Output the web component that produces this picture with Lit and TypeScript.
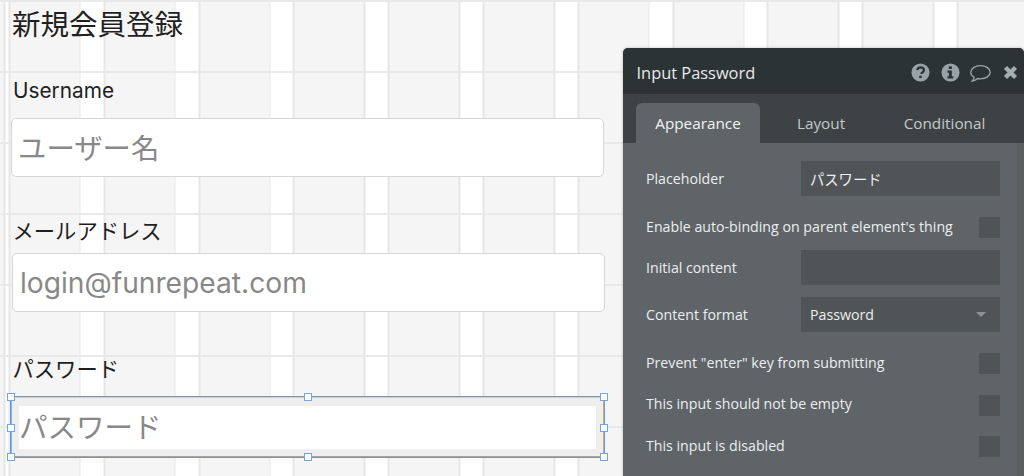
import { LitElement, css, html, svg } from 'lit';
import { customElement } from 'lit/decorators.js';

type Row =
	| { kind: 'input'; label: string; value?: string; select?: boolean }
	| { kind: 'check'; label: string };

const ROWS: Row[] = [
	{ kind: 'input', label: 'Placeholder', value: 'パスワード' },
	{ kind: 'check', label: "Enable auto-binding on parent element's thing" },
	{ kind: 'input', label: 'Initial content' },
	{ kind: 'input', label: 'Content format', value: 'Password', select: true },
	{ kind: 'check', label: 'Prevent "enter" key from submitting' },
	{ kind: 'check', label: 'This input should not be empty' },
	{ kind: 'check', label: 'This input is disabled' },
];

// selection handles, as percent of the selected box
const HANDLES = [
	[0, 0],
	[50, 0],
	[100, 0],
	[0, 51],
	[100, 51],
	[0, 100],
	[50, 100],
	[100, 100],
];

const ICON_HELP = svg`<circle cx="10" cy="10" r="9.5" fill="#98a3a7"/>
	<path d="M6.6 7.6c.2-2 1.6-3 3.5-3 2 0 3.5 1.2 3.5 2.9 0 1.5-1 2.1-1.9 2.7-.6.4-.8.7-.8 1.3" fill="none" stroke="#2b3335" stroke-width="2.3"/>
	<rect x="8.7" y="13.3" width="2.5" height="2.5" fill="#2b3335"/>`;

const ICON_INFO = svg`<circle cx="10" cy="10" r="9.5" fill="#98a3a7"/>
	<rect x="8.2" y="3.5" width="3.2" height="2.8" fill="#2b3335"/>
	<path d="M6.8 8h4.6v6h1.5v2.2H6.8V14h1.5v-3.8H6.8z" fill="#2b3335"/>`;

const ICON_BUBBLE = svg`<path d="M11 1.5c5.2 0 9.3 2.8 9.3 6.3s-4.1 6.3-9.3 6.3c-1 0-1.9-.1-2.8-.3-1.3 1.2-3 2-5 2.4.9-1 1.5-2.1 1.7-3.6C2.9 11.5 1.7 9.7 1.7 7.8c0-3.5 4.1-6.3 9.3-6.3z" fill="none" stroke="#98a3a7" stroke-width="1.3"/>`;

const ICON_CLOSE = svg`<path d="M2.5 2.5l10 10M12.5 2.5l-10 10" fill="none" stroke="#a3aeb1" stroke-width="4.3"/>`;

@customElement('app-root')
export class AppRoot extends LitElement {
	static styles = css`
		:host {
			display: block;
			position: relative;
			width: 1024px;
			height: 476px;
			overflow: hidden;
			font-family: 'Inter', 'Noto Sans CJK JP', sans-serif;
			color: #1f1f1f;
			background-color: #ffffff;
			background-image:
				repeating-linear-gradient(to bottom, #e9e9e9 0 2px, transparent 2px 71px),
				repeating-linear-gradient(
					to right,
					#e6e6e6 0 2px,
					#f5f5f5 2px 71px,
					#e6e6e6 71px 72.5px,
					#ffffff 72.5px 94.8px
				);
			background-position: 0 0, 8.5px 0;
		}

		.form {
			display: flex;
			flex-direction: column;
		}

		.title {
			height: 48px;
			line-height: 45px;
			margin-left: 12px;
			font-family: 'Noto Sans CJK JP', sans-serif;
			font-size: 28.5px;
		}

		.label {
			height: 30px;
			line-height: 30px;
			margin-left: 13px;
			font-size: 20.8px;
		}

		.label.jp {
			margin-left: 12.5px;
			font-size: 21.3px;
			line-height: 27px;
			font-family: 'Noto Sans CJK JP', sans-serif;
		}

		.field {
			box-sizing: border-box;
			width: 593px;
			height: 59px;
			display: flex;
			align-items: center;
			background: #ffffff;
			border: 1px solid #d6d6d6;
			border-radius: 5px;
			font-size: 28px;
			color: #888888;
		}

		.jp-text {
			font-family: 'Noto Sans CJK JP', sans-serif;
		}

		.username { margin-top: 28px; }
		.field-name {
			margin: 12px 0 0 11px;
			padding: 0 0 3px 6px;
			font-size: 28.4px;
		}
		.mail { margin-top: 39px; }
		.field-mail {
			margin: 7px 0 0 12px;
			padding-left: 7px;
			font-size: 28.2px;
		}
		.password { margin-top: 42px; }

		.selected {
			position: relative;
			box-sizing: border-box;
			width: 593px;
			height: 60px;
			margin: 13px 0 0 11px;
			padding: 8px 7px;
			background: #eeeeee;
			border-style: solid;
			border-width: 1px;
			border-color: #f0c9a0 #e3a765 #d69a55 #8fb4d8;
			box-shadow: 0 0 0 1px #5a9ae6;
		}

		.selected-inner {
			width: 577px;
			height: 43px;
			line-height: 39px;
			background: #ffffff;
			font-size: 28.5px;
			color: #888888;
		}

		.handles {
			position: absolute;
			inset: -1px;
		}

		.handle {
			position: absolute;
			box-sizing: border-box;
			width: 8px;
			height: 8px;
			background: #ffffff;
			border: 1px solid #6ea5ef;
			transform: translate(-50%, -50%);
		}

		.panel {
			position: absolute;
			left: 622.5px;
			top: 48px;
			right: 0;
			bottom: 0;
			display: flex;
			flex-direction: column;
			border-radius: 5px 5px 0 0;
			overflow: hidden;
			font-family: 'Open Sans', sans-serif;
			background: #5f6468;
			box-shadow: 0 0 3px rgba(0, 0, 0, 0.25);
		}

		.header {
			flex: none;
			box-sizing: border-box;
			height: 46px;
			display: flex;
			align-items: center;
			padding: 2px 6px 0 14px;
			background: #2b3335;
			color: #e8eaeb;
			font-size: 16.4px;
		}

		.header-title {
			flex: 1;
		}

		.header-icons {
			display: flex;
			align-items: center;
		}

		.header-icons svg {
			display: block;
		}

		.i-help { margin-right: 11px; }
		.i-info { margin-right: 9px; }
		.i-bubble {
			margin-right: 11px;
			margin-top: 3px;
		}

		.tabs {
			flex: none;
			box-sizing: border-box;
			height: 49px;
			display: flex;
			align-items: flex-end;
			padding-left: 13.5px;
			background: #3d4345;
			font-size: 15.3px;
			color: #c4c8ca;
		}

		.tab {
			height: 40px;
			line-height: 41px;
			text-align: center;
		}

		.tab.appearance {
			width: 124px;
			background: #5f6468;
			border-radius: 6px 6px 0 0;
			color: #f2f3f3;
		}

		.tab.layout { width: 122px; }
		.tab.conditional { width: 125px; }

		.body {
			flex: 1;
			display: flex;
			min-height: 0;
		}

		.rows {
			flex: 1;
			padding: 18px 17px 0 23.5px;
			color: #eceeef;
			font-size: 14.2px;
		}

		.scroll {
			flex: none;
			width: 7px;
			background: #5a5f62;
		}

		.row {
			display: flex;
			align-items: center;
			justify-content: space-between;
		}

		.row-input {
			height: 35px;
			margin-top: 12px;
		}

		.row-input:first-child {
			margin-top: 0;
		}

		.row-input > span {
			padding-bottom: 1px;
		}

		.row-check {
			height: 21px;
			margin-top: 21px;
		}

		.row-check > span {
			padding-bottom: 3px;
		}

		.row-check + .row-check {
			margin-top: 20.5px;
		}

		.control {
			box-sizing: border-box;
			width: 199px;
			height: 35px;
			display: flex;
			align-items: center;
			justify-content: space-between;
			padding: 0 14px 0 9px;
			background: #505456;
			color: #eceeef;
		}

		.control.jp {
			font-family: 'Noto Sans CJK JP', sans-serif;
			font-size: 14.3px;
		}

		.caret {
			width: 0;
			height: 0;
			border-left: 5px solid transparent;
			border-right: 5px solid transparent;
			border-top: 5px solid #8d9295;
		}

		.checkbox {
			width: 21px;
			height: 21px;
			background: #505456;
		}
	`;

	private renderRow(row: Row) {
		if (row.kind === 'check') {
			return html`<div class="row row-check">
				<span>${row.label}</span>
				<div class="checkbox"></div>
			</div>`;
		}
		const isJp = row.value === 'パスワード';
		return html`<div class="row row-input">
			<span>${row.label}</span>
			<div class="control ${isJp ? 'jp' : ''}">
				<span>${row.value ?? ''}</span>
				${row.select ? html`<span class="caret"></span>` : ''}
			</div>
		</div>`;
	}

	render() {
		return html`
			<div class="form">
				<div class="title">新規会員登録</div>
				<div class="label username">Username</div>
				<div class="field field-name jp-text">ユーザー名</div>
				<div class="label jp mail">メールアドレス</div>
				<div class="field field-mail">login@funrepeat.com</div>
				<div class="label jp password">パスワード</div>
				<div class="selected">
					<div class="selected-inner jp-text">パスワード</div>
					<div class="handles">
						${HANDLES.map(([x, y]) => html`<span class="handle" style="left:${x}%;top:${y}%"></span>`)}
					</div>
				</div>
			</div>

			<div class="panel">
				<div class="header">
					<span class="header-title">Input Password</span>
					<div class="header-icons">
						<svg class="i-help" width="19" height="19" viewBox="0 0 20 20">${ICON_HELP}</svg>
						<svg class="i-info" width="19" height="19" viewBox="0 0 20 20">${ICON_INFO}</svg>
						<svg class="i-bubble" width="23" height="19" viewBox="0 0 22 18">${ICON_BUBBLE}</svg>
						<svg width="15" height="15" viewBox="0 0 15 15">${ICON_CLOSE}</svg>
					</div>
				</div>
				<div class="tabs">
					<div class="tab appearance">Appearance</div>
					<div class="tab layout">Layout</div>
					<div class="tab conditional">Conditional</div>
				</div>
				<div class="body">
					<div class="rows">${ROWS.map((r) => this.renderRow(r))}</div>
					<div class="scroll"></div>
				</div>
			</div>
		`;
	}
}
